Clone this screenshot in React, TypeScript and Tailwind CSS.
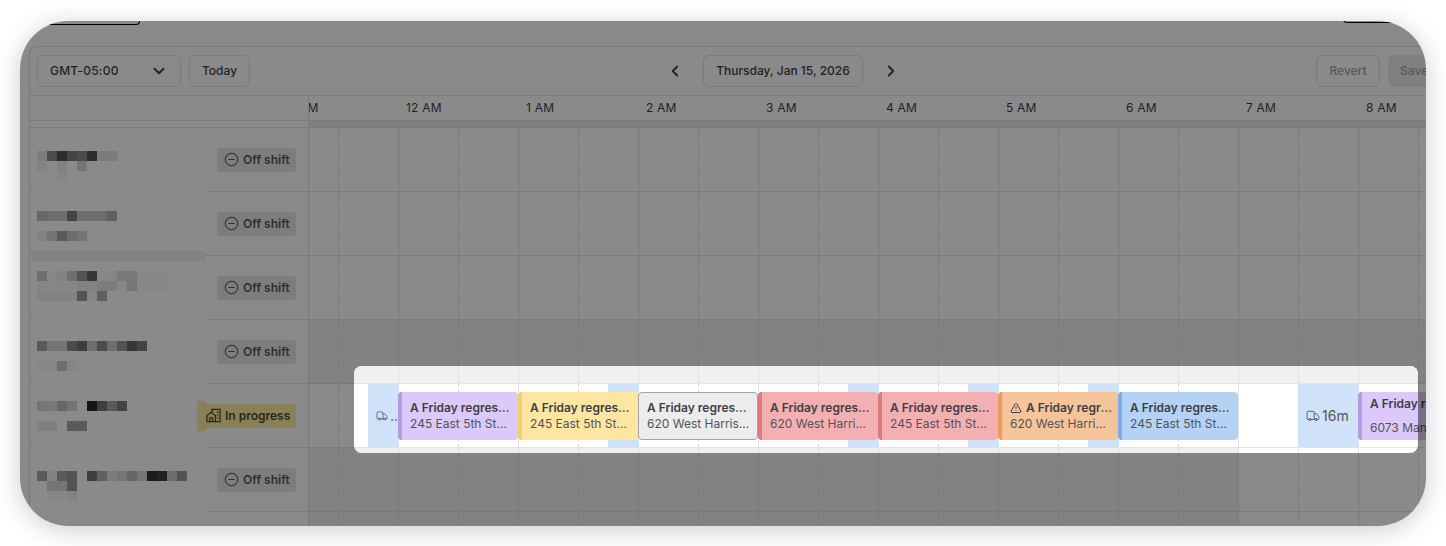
import React from "react";
import { ChevronDown, ChevronLeft, ChevronRight, CircleMinus, TriangleAlert, Truck } from "lucide-react";

type Card = {
  x: number;
  width: number;
  title: string;
  address: string;
  box: string;
  warn?: boolean;
  spread?: boolean;
};

type Travel = { x: number; width: number; label?: string };

const HOURS = ["11 PM", "12 AM", "1 AM", "2 AM", "3 AM", "4 AM", "5 AM", "6 AM", "7 AM", "8 AM"];

const PURPLE = "bg-[#dac9f9] border-l-4 border-[#b49ae9] pl-2 pr-2";
const YELLOW = "bg-[#fce6a2] border-l-4 border-[#f3d06e] pl-2 pr-2";
const RED = "bg-[#f2b0b3] border-l-4 border-[#e0797c] pl-2 pr-2";
const ORANGE = "bg-[#f6c49b] border-l-4 border-[#ee9a5c] pl-2 pr-[5px]";
const BLUE = "bg-[#b3d2f4] border-l-4 border-[#7fabee] pl-2 pr-2";
const GRAY = "bg-[#ececec] border border-[#a3a3a3] pl-2 pr-[6px]";

const TRAVEL: Travel[] = [
  { x: 368, width: 31, label: "…" },
  { x: 608, width: 31 },
  { x: 848, width: 31 },
  { x: 968, width: 31 },
  { x: 1088, width: 31 },
  { x: 1298, width: 61, label: "16m" },
];

const CARDS: Card[] = [
  { x: 398, width: 120, title: "A Friday regression", address: "245 East 5th Street", box: PURPLE },
  { x: 518, width: 120, title: "A Friday regression", address: "245 East 5th Street", box: YELLOW },
  { x: 638, width: 120, title: "A Friday regression", address: "620 West Harrison", box: GRAY },
  { x: 758, width: 120, title: "A Friday regression", address: "620 West Harrison", box: RED },
  { x: 878, width: 120, title: "A Friday regression", address: "245 East 5th Street", box: RED },
  { x: 998, width: 120, title: "A Friday regression", address: "620 West Harrison", box: ORANGE, warn: true },
  { x: 1118, width: 120, title: "A Friday regression", address: "245 East 5th Street", box: BLUE },
  { x: 1358, width: 160, title: "A Friday regression", address: "6073 Manor Road", box: PURPLE, spread: true },
];

// only this one sticks out past the spotlight, the rest never show under the dim
const PAST_SPOTLIGHT = CARDS.filter((c) => c.spread);

// redacted names, one strip of 10px blocks per text line: [page y, darkness...]
const MOSAIC: number[][] = [
  [151, 0.1, 0.45, 0.68, 0.5, 0.45, 0.68, 0.1, 0.1],
  [161, 0.05, 0, 0.06, 0, 0.15],
  [171, 0, 0, 0.04],
  [211, 0.25, 0.2, 0.2, 0.5, 0.2, 0.2, 0.2, 0.3],
  [231, 0.05, 0.15, 0.35, 0.2, 0.15],
  [271, 0.2, 0.03, 0.05, 0.2, 0.4, 0.6, 0.03, 0.03, 0.12, 0.12, 0.02, 0.02, 0.02],
  [281, 0.03, 0.03, 0.03, 0.03, 0.06, 0.06, 0.1, 0.1, 0.03, 0.15, 0.02, 0.02, 0.02],
  [291, 0.05, 0.05, 0.05, 0.05, 0.4, 0.03, 0.3],
  [341, 0.35, 0.15, 0.15, 0.45, 0.55, 0.2, 0.45, 0.2, 0.4, 0.6, 0.5],
  [361, 0.03, 0.03, 0.2, 0.03],
  [401, 0.15, 0.12, 0.25, 0.15, 0, 0.85, 0.55, 0.35, 0.5],
  [421, 0.08, 0.08, 0, 0.35, 0.35],
  [471, 0.35, 0.05, 0.35, 0.4, 0, 0.55, 0.3, 0.1, 0.15, 0.25, 0.15, 0.8, 0.75, 0.2, 0.4],
  [481, 0, 0.15, 0.15, 0.4],
  [491, 0, 0.02, 0.02, 0.06],
];

function Mosaic() {
  return (
    <svg
      className="absolute left-[12px] top-[107px] w-[174px] h-[398px]"
      viewBox="32 128 174 398"
      aria-hidden="true">
      <rect x="32" y="128" width="174" height="398" fill="#fff" />
      <rect x="32" y="251" width="174" height="10" fill="#000" fillOpacity="0.05" />
      <rect x="197" y="401" width="9" height="30" fill="#ffeca2" />
      {MOSAIC.map(([y, ...cells]) =>
        cells.map((o, i) => (
          <rect key={`${y}-${i}`} x={37 + i * 10} y={y} width="10" height="10" fill="#000" fillOpacity={o} />
        )),
      )}
    </svg>
  );
}

function HouseBuilding() {
  return (
    <svg className="w-[15px] h-[15px] shrink-0" viewBox="0 0 16 16" fill="none" stroke="currentColor" strokeWidth="1.4" aria-hidden="true">
      <path d="M1 14.5V8l4.5-3.5L10 8v6.5z" />
      <path d="M4 14.5v-4h3v4" />
      <path d="M6.5 5V1.5h8.5v13h-5" />
      <path d="M11.5 4.5h1.5M11.5 7.5h1.5M11.5 10.5h1.5" />
    </svg>
  );
}

function StatusBadge({ active }: { active?: boolean }) {
  if (active) {
    return (
      <div className="h-6 w-[99px] pl-[9px] flex items-center gap-[4px] rounded-r bg-[#ffeca2] text-[#4f4a33] text-xs font-semibold">
        <HouseBuilding />
        <span>In progress</span>
      </div>
    );
  }
  return (
    <div className="h-6 w-[79px] pl-[7px] flex items-center gap-1 rounded bg-[#e8e8e8] text-[#555] text-xs font-semibold">
      <CircleMinus size={15} strokeWidth={1.7} />
      <span>Off shift</span>
    </div>
  );
}

function HourCell({ dark }: { dark?: boolean }) {
  return (
    <div className={`w-[120px] shrink-0 flex ${dark ? "bg-[#f0f0f0]" : ""}`}>
      <div className="w-[60px] border-r border-dashed border-[#dcdcdc]" />
      <div className="w-[60px] border-r border-[#e2e2e2]" />
    </div>
  );
}

function ScheduleCard({ card }: { card: Card }) {
  return (
    <div
      className={`absolute top-2 h-12 rounded flex flex-col text-xs ${card.spread ? "justify-between py-1" : "justify-center"} ${card.box}`}
      style={{ left: card.x - 309, width: card.width }}>
      <div className="flex items-center gap-1 text-[#3f3f46] font-semibold leading-4 min-w-0">
        {card.warn && <TriangleAlert size={12} className="shrink-0" />}
        <span className="truncate">{card.title}</span>
      </div>
      <div className={`truncate text-[#52525b] leading-4 ${card.warn ? "pr-[3px]" : ""}`}>{card.address}</div>
    </div>
  );
}

function TravelBlock({ x, width, label }: Travel) {
  return (
    <div
      className="absolute top-0 h-[63px] bg-[#cfe2f8] flex items-center pl-2 pr-0.5 text-sm text-[#52525b] overflow-hidden"
      style={{ left: x - 309, width }}>
      {label && <Truck size={width > 40 ? 14 : 12} strokeWidth={1.5} className="shrink-0 mr-0.5" />}
      {label && <span className="min-w-0 overflow-hidden whitespace-nowrap">{label}</span>}
    </div>
  );
}

function TimelineCells({ darkCells = 0, travel = [], cards = [] }: { darkCells?: number; travel?: Travel[]; cards?: Card[] }) {
  return (
    <div className="relative h-16 w-[1117px] overflow-hidden border-b border-[#e2e2e2]">
      <div className="flex h-full -ml-[30px]">
        {HOURS.map((h, i) => (
          <HourCell key={h} dark={i < darkCells} />
        ))}
      </div>
      {travel.map((t) => (
        <TravelBlock key={t.x} {...t} />
      ))}
      {cards.map((c) => (
        <ScheduleCard key={c.x} card={c} />
      ))}
    </div>
  );
}

function Row({ active, darkCells, cards }: { active?: boolean; darkCells?: number; cards?: Card[] }) {
  return (
    <div className="flex">
      <div className="w-[279px] h-16 shrink-0 flex items-center justify-end pr-3 border-r border-b border-[#e2e2e2]">
        <StatusBadge active={active} />
      </div>
      <TimelineCells darkCells={darkCells} cards={cards} />
    </div>
  );
}

export default function App() {
  return (
    <div className="w-[1446px] h-[546px] bg-white overflow-hidden pt-[21px] pl-[20px] font-['Inter',sans-serif]">
      <div className="relative w-[1406px] h-[505px] rounded-[48px] overflow-hidden bg-white shadow-[0_4px_26px_rgba(0,0,0,0.2)]">
        {/* tabs peeking in from above the panel */}
        <div className="absolute -top-2 left-[10px] w-[110px] h-3 border-r border-b border-black rounded-br" />
        <div className="absolute -top-2 left-[1323px] w-[60px] h-[10px] border-l border-b border-black rounded-bl" />

        <div className="mt-[25px] ml-[9px] w-[1397px] border-t border-l border-[#e2e2e2] rounded-tl-lg">
          <div className="h-[49px] flex items-center pl-[7px] border-b border-[#e2e2e2] text-xs font-medium text-[#3f3f46]">
            <button className="w-[144px] h-8 px-3 flex items-center justify-between rounded-md border border-[#e2e2e2] shrink-0 tracking-[0.2px]">
              GMT-05:00
              <ChevronDown size={18} strokeWidth={2.5} />
            </button>
            <button className="w-[61px] h-8 ml-2 rounded-md border border-[#e2e2e2] shrink-0">Today</button>
            <ChevronLeft size={18} strokeWidth={2.5} className="ml-[416px] shrink-0" />
            <button className="w-[160px] h-8 ml-[19px] rounded-md border border-[#e2e2e2] shrink-0">
              Thursday, Jan 15, 2026
            </button>
            <ChevronRight size={18} strokeWidth={2.5} className="ml-[19px] shrink-0" />
            <button className="w-16 h-8 ml-[416px] rounded-md border border-[#e2e2e2] text-[#a1a1aa] shrink-0">Revert</button>
            <button className="w-[60px] h-8 ml-2 pl-3 text-left rounded-md bg-[#ebebeb] text-[#a1a1aa] shrink-0">Save</button>
          </div>

          <div className="flex h-[25px] border-b border-[#e2e2e2]">
            <div className="w-[279px] shrink-0 border-r border-[#e2e2e2]" />
            <div className="flex-1 overflow-hidden">
              <div className="flex -ml-[30px] text-xs text-[#3f3f46] leading-[24px] tracking-[0.2px]">
                {HOURS.map((h) => (
                  <div key={h} className="w-[120px] shrink-0 pl-[7px]">
                    {h}
                  </div>
                ))}
              </div>
            </div>
          </div>

          <div className="flex h-[7px] border-b border-[#e2e2e2]">
            <div className="w-[279px] shrink-0 border-r border-[#e2e2e2]" />
            <div className="flex-1 bg-[#ebebeb]" />
          </div>

          <Row />
          <Row />
          <Row />
          <Row darkCells={10} />
          <Row active cards={PAST_SPOTLIGHT} />
          <Row darkCells={8} />
          <Row darkCells={8} />
        </div>

        <Mosaic />

        {/* page dim */}
        <div className="absolute inset-0 bg-black/46" />

        {/* spotlight on the in-progress row */}
        <div className="absolute left-[334px] top-[345px] w-[1064px] h-[87px] rounded-lg overflow-hidden bg-white">
          <div className="-mt-[46px] -ml-[45px]">
            <TimelineCells darkCells={10} />
            <TimelineCells travel={TRAVEL} cards={CARDS} />
            <TimelineCells darkCells={8} />
          </div>
        </div>
      </div>
    </div>
  );
}
